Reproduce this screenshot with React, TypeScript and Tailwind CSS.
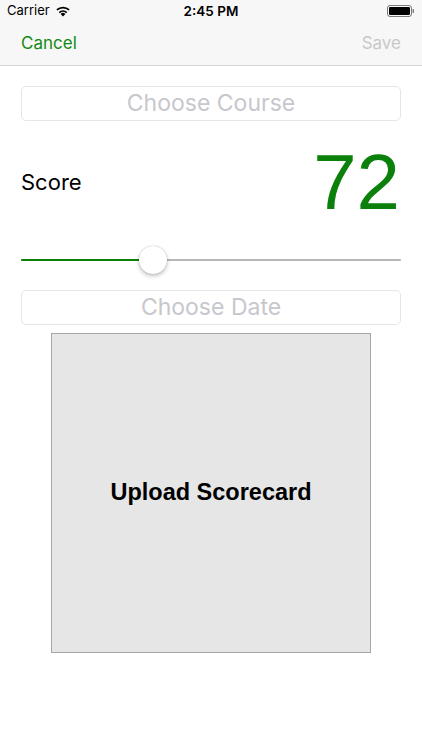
import React from "react"

const SF = "font-['Inter','Liberation_Sans',sans-serif]"

function Wifi() {
  return (
    <svg width="16" height="12" viewBox="0 0 16 12" aria-hidden>
      <path d="M8 11.5 L5.6 8.9 A3.6 3.6 0 0 1 10.4 8.9 Z" fill="#000" />
      <path d="M3.7 6.9 A6.4 6.4 0 0 1 12.3 6.9 L11.1 8.2 A4.7 4.7 0 0 0 4.9 8.2 Z" fill="#000" />
      <path d="M1.3 4.3 A9.8 9.8 0 0 1 14.7 4.3 L13.5 5.6 A8 8 0 0 0 2.5 5.6 Z" fill="#000" />
    </svg>
  )
}

function Battery() {
  return (
    <svg width="28" height="12" viewBox="0 0 28 12" aria-hidden>
      <rect x="0.5" y="0.5" width="24" height="11" rx="2.5" fill="none" stroke="#000" strokeOpacity="0.5" />
      <rect x="2" y="2" width="21" height="8" rx="1.2" fill="#000" />
      <rect x="25.5" y="4" width="1.5" height="4" rx="0.7" fill="#000" fillOpacity="0.5" />
    </svg>
  )
}

function Field({ label }: { label: string }) {
  return (
    <div className="h-[35px] rounded-[5px] border border-[#e6e6e6] flex items-center justify-center">
      <span className="text-[23px] leading-none text-[#c7c7cd]">{label}</span>
    </div>
  )
}

export default function App() {
  const pct = 0.347

  return (
    <div className={`w-[422px] h-[750px] bg-white relative overflow-hidden ${SF}`}>
      {/* status + nav bar */}
      <div className="bg-[#f7f7f7] border-b border-[#d6d6d6] h-[66px]">
        <div className="h-[22px] flex items-center justify-between px-[7px] relative">
          <div className="flex items-center gap-[5px]">
            <span className="text-[13px] text-black">Carrier</span>
            <Wifi />
          </div>
          <span className="absolute left-1/2 -translate-x-1/2 text-[13.5px] font-semibold text-black">2:45 PM</span>
          <Battery />
        </div>
        <div className="h-[43px] flex items-center justify-between px-[21px]">
          <span className="text-[17px] text-[#138a13]">Cancel</span>
          <span className="text-[17px] text-[#c8c8c8]">Save</span>
        </div>
      </div>

      <div className="px-[21px] pt-[20px]">
        <Field label="Choose Course" />

        <div className="flex items-center justify-between mt-[25px] h-[72px]">
          <span className="text-[22px] text-black">Score</span>
          <span className="text-[78px] leading-none text-[#0b800b] font-['Liberation_Sans',sans-serif] mr-[1px]">
            72
          </span>
        </div>

        {/* slider */}
        <div className="relative h-[28px] mt-[28px]">
          <div className="absolute left-0 right-0 top-1/2 h-[2px] -translate-y-1/2 bg-[#b7b7b7] rounded" />
          <div
            className="absolute left-0 top-1/2 h-[2px] -translate-y-1/2 bg-[#0b800b] rounded"
            style={{ width: `${pct * 100}%` }}
          />
          <div
            className="absolute top-0 w-[28px] h-[28px] rounded-full bg-white shadow-[0_2px_4px_rgba(0,0,0,0.25),0_0_1px_rgba(0,0,0,0.3)] -translate-x-1/2"
            style={{ left: `${pct * 100}%` }}
          />
        </div>

        <div className="mt-[16px]">
          <Field label="Choose Date" />
        </div>
      </div>

      <div className="mt-[8px] mx-auto w-[320px] h-[320px] bg-[#e6e6e6] border border-[#a6a6a6] flex items-center justify-center">
        <span className="text-[23.5px] font-bold text-black font-['Liberation_Sans',sans-serif]">Upload Scorecard</span>
      </div>
    </div>
  )
}
